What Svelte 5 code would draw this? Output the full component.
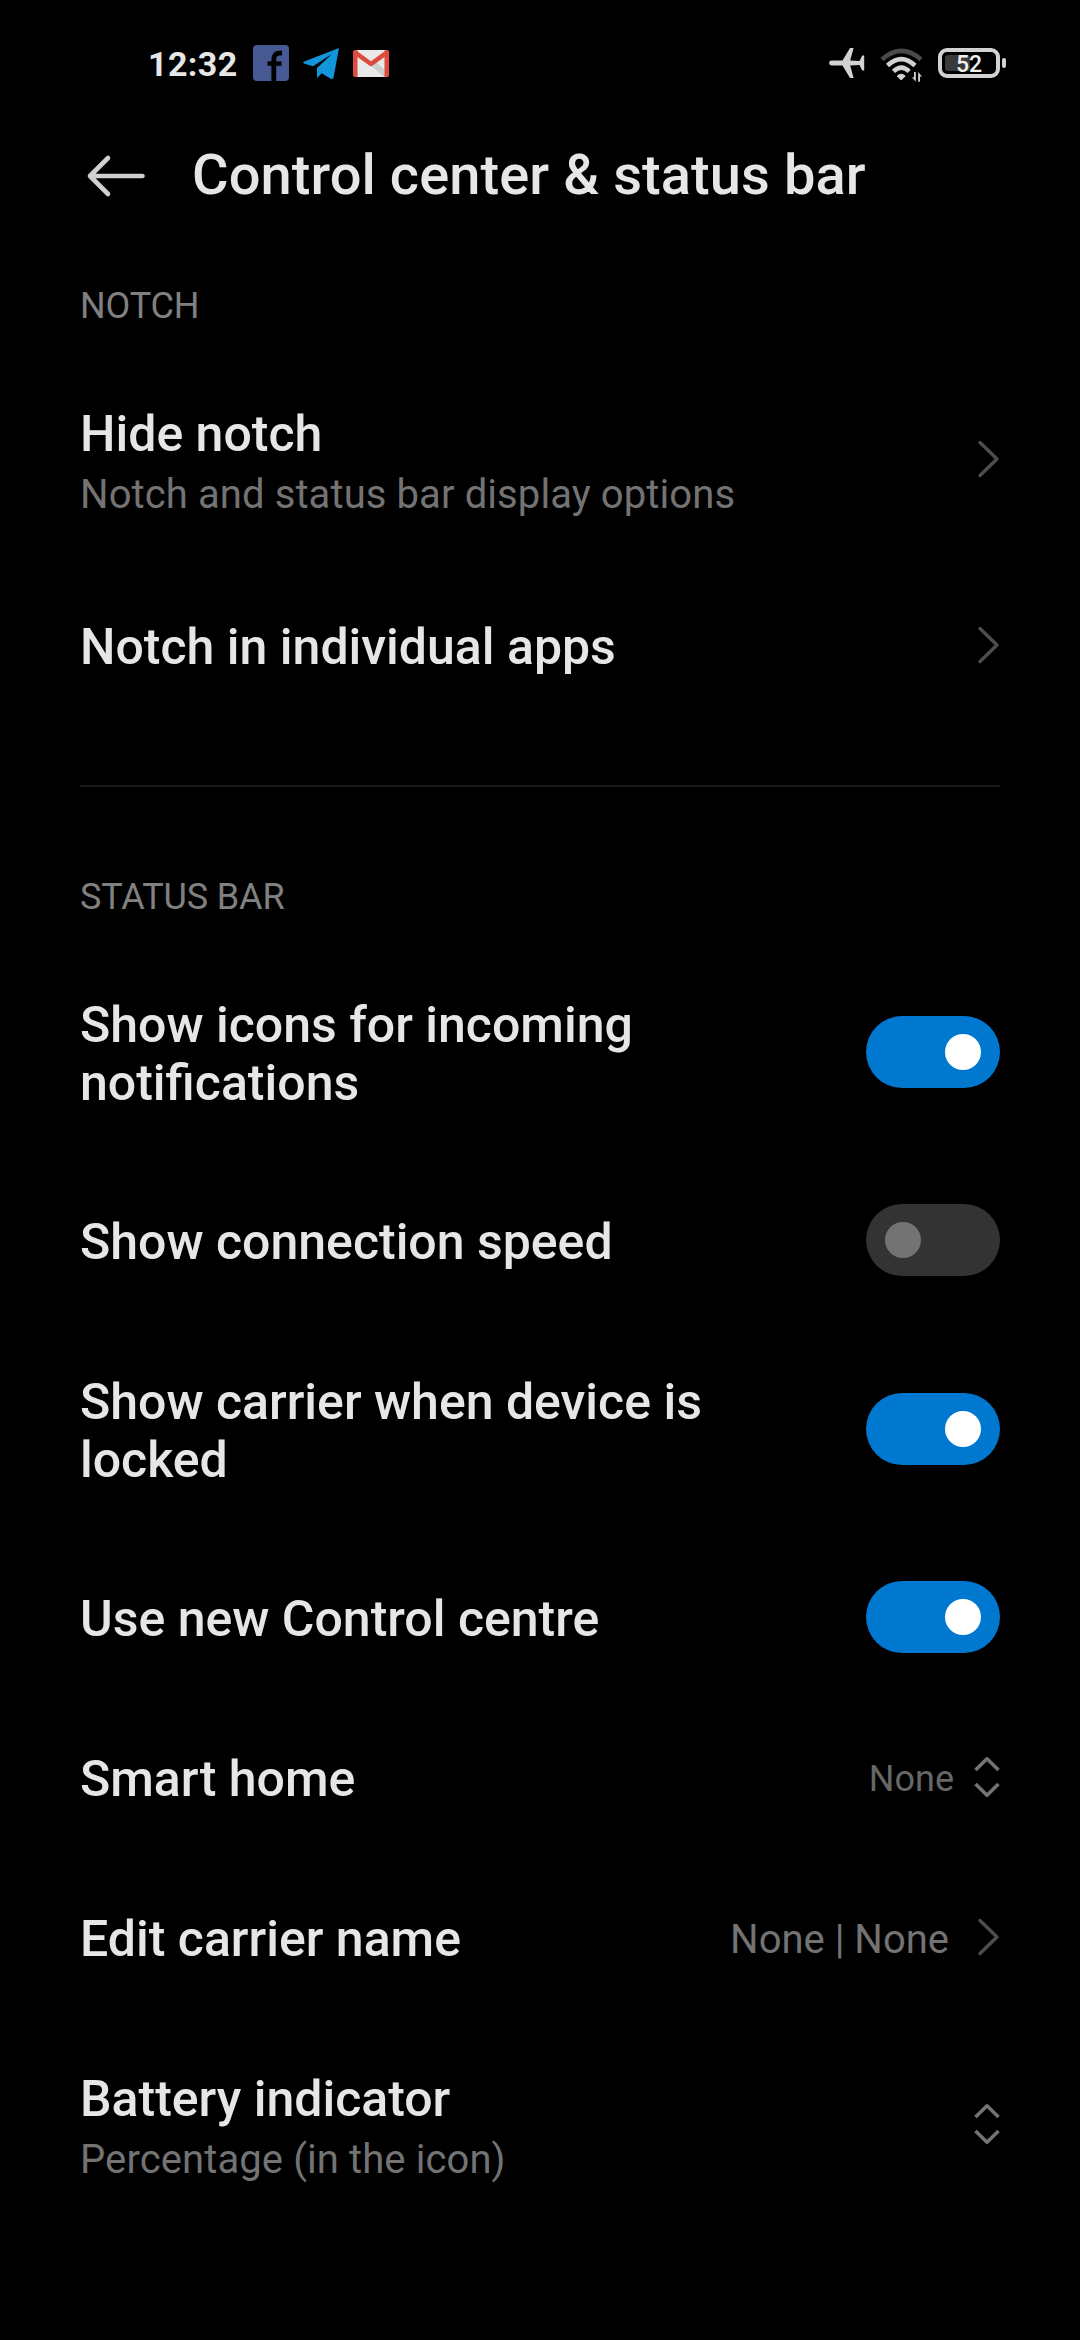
<script lang="ts">
  let battery = 52;

  let notchItems = [
    { title: 'Hide notch', summary: 'Notch and status bar display options' },
    { title: 'Notch in individual apps', summary: '' }
  ];

  let toggles = $state([
    { title: 'Show icons for incoming notifications', on: true, tall: true },
    { title: 'Show connection speed', on: false, tall: false },
    { title: 'Show carrier when device is locked', on: true, tall: true },
    { title: 'Use new Control centre', on: true, tall: false }
  ]);

  let options = [
    { title: 'Smart home', summary: '', value: 'None', type: 'picker' },
    { title: 'Edit carrier name', summary: '', value: 'None | None', type: 'link' },
    { title: 'Battery indicator', summary: 'Percentage (in the icon)', value: '', type: 'picker' }
  ];
</script>

{#snippet chevron()}
  <svg class="chevron" width="24" height="40" viewBox="0 0 24 40">
    <path d="M4 3.5 L21 20 L4 36.5" />
  </svg>
{/snippet}

{#snippet picker()}
  <svg class="picker" width="26" height="42" viewBox="0 0 26 42">
    <path d="M1.5 14 L13 2.8 L24.5 14 M1.5 28 L13 39.2 L24.5 28" />
  </svg>
{/snippet}

<div class="screen">
  <div class="status-bar">
    <div class="status-left">
      <span class="time">12:32</span>
      <svg class="app-icon" width="36" height="36" viewBox="0 0 36 36">
        <rect width="36" height="36" rx="4" fill="#475993" />
        <path d="M20.8 36 V14.5 Q20.8 8.2 26.5 8.2 H29" fill="none" stroke="#000" stroke-width="4.8" />
        <path d="M14.5 18.6 H28.6" stroke="#000" stroke-width="4.4" />
      </svg>
      <svg class="app-icon" width="36" height="36" viewBox="0 0 36 36">
        <path d="M36 3 L0 17 L1 18.6 L10 21.3 L29 9 L14 23 V33 L18.8 28.2 L28.4 34.2 L30.4 33.2 Z" fill="#1296db" />
      </svg>
      <svg class="app-icon" width="36" height="36" viewBox="0 0 36 36">
        <rect y="5" width="36" height="27" rx="3" fill="#e9e9e9" />
        <path d="M18 20.5 L23 17 L34 27 V32 H31 Z" fill="#cbcfcf" />
        <path d="M0 8 Q0 5 3 5 L4.5 5.5 V32 H3 Q0 32 0 29 Z M36 8 Q36 5 33 5 L31.5 5.5 V32 H33 Q36 32 36 29 Z" fill="#dd4b3e" />
        <path d="M2.3 7.7 L18 19 L33.7 7.7" fill="none" stroke="#dd4b3e" stroke-width="4.6" stroke-linejoin="round" stroke-linecap="round" />
      </svg>
    </div>
    <div class="status-right">
      <svg class="plane" width="36" height="32" viewBox="0 0 36 32">
        <path d="M2.5 13.6 H13.5 L21 1 H24.6 L21.2 13.4 L30.5 14 L33.2 8.5 H35.2 V23.5 H33.2 L30.5 18 L21.2 18.6 L24.6 31 H21 L13.5 18.4 H2.5 A2.4 2.4 0 0 1 2.5 13.6 Z" fill="#d2d2d2" />
      </svg>
      <svg class="wifi" width="44" height="34" viewBox="0 0 44 34">
        <g fill="none" stroke-width="4.6">
          <path d="M2 11.5 Q21.3 -5.6 41 11.5" stroke="#4a4a4a" />
          <path d="M7.5 17.5 Q21.3 4.6 35 17.5" stroke="#d2d2d2" />
          <path d="M13.5 23.4 Q21.3 15.8 29.2 23.4" stroke="#d2d2d2" />
        </g>
        <path d="M17.2 28 Q21.2 24.5 25.2 28 L21.2 32 Z" fill="#d2d2d2" stroke="#d2d2d2" stroke-linejoin="round" />
        <path d="M35.8 24 V33.8 L32 29.3 H34 V24 Z M38.2 33.8 V24 L42 28.5 H40 V33.8 Z" fill="#d2d2d2" />
      </svg>
      <div class="battery">
        <div class="battery-level" style="width: {battery}%"></div>
        <span class="battery-text">{battery}</span>
      </div>
      <div class="battery-tip"></div>
    </div>
  </div>

  <header class="header">
    <svg class="back" width="60" height="44" viewBox="0 0 60 44">
      <path d="M56.5 22 H4 M22 4 L4 22 L22 40" />
    </svg>
    <h1>Control center &amp; status bar</h1>
  </header>

  <section>
    <h2>NOTCH</h2>
    {#each notchItems as item}
      <div class="row" class:with-summary={item.summary}>
        <div class="label">
          <div class="title">{item.title}</div>
          {#if item.summary}
            <div class="summary">{item.summary}</div>
          {/if}
        </div>
        {@render chevron()}
      </div>
    {/each}
  </section>

  <div class="divider"></div>

  <section>
    <h2>STATUS BAR</h2>
    {#each toggles as item}
      <div class="row" class:tall={item.tall}>
        <div class="label narrow">
          <div class="title">{item.title}</div>
        </div>
        <button
          class="switch"
          class:on={item.on}
          aria-label={item.title}
          onclick={() => (item.on = !item.on)}
        >
          <span class="knob"></span>
        </button>
      </div>
    {/each}

    {#each options as item}
      <div class="row" class:with-summary={item.summary}>
        <div class="label">
          <div class="title">{item.title}</div>
          {#if item.summary}
            <div class="summary">{item.summary}</div>
          {/if}
        </div>
        {#if item.value}
          <span class="value {item.type}-value">{item.value}</span>
        {/if}
        {#if item.type === 'picker'}
          {@render picker()}
        {:else}
          {@render chevron()}
        {/if}
      </div>
    {/each}
  </section>
</div>

<style>
  :global(body) {
    background: #000;
  }

  .screen {
    box-sizing: border-box;
    width: 1080px;
    height: 2340px;
    overflow: hidden;
    background: #000;
    color: #e6e6e6;
    font-family: Roboto, sans-serif;
  }

  .status-bar {
    display: flex;
    justify-content: space-between;
    align-items: center;
    height: 126px;
    padding: 0 74px 0 148px;
  }

  .status-left,
  .status-right {
    display: flex;
    align-items: center;
  }

  .time {
    width: 91px;
    margin-right: 14px;
    font-size: 34px;
    font-weight: 700;
    letter-spacing: 0.4px;
    line-height: 40px;
    white-space: nowrap;
    padding-top: 2px;
  }

  .app-icon {
    margin-right: 14px;
  }

  .plane {
    margin-right: 15px;
  }

  .wifi {
    margin-right: 14px;
    margin-top: 3px;
  }

  .battery {
    box-sizing: border-box;
    position: relative;
    width: 62px;
    height: 30px;
    padding: 3px;
    border: 4px solid #d2d2d2;
    border-radius: 9px;
  }

  .battery-level {
    height: 100%;
    border-radius: 3px;
    background: #3a3a3a;
  }

  .battery-text {
    position: absolute;
    inset: 0;
    font-size: 23px;
    font-weight: 500;
    line-height: 25px;
    text-align: center;
    color: #f0f0f0;
  }

  .battery-tip {
    width: 4px;
    height: 10px;
    margin-left: 2px;
    border-radius: 2px;
    background: #d2d2d2;
  }

  .header {
    display: flex;
    align-items: center;
    height: 100px;
    padding: 0 80px 0 86px;
  }

  .back {
    margin-right: 46px;
    fill: none;
    stroke: #d0d0d0;
    stroke-width: 4.6;
    stroke-linecap: round;
    stroke-linejoin: round;
  }

  h1 {
    margin: 0;
    padding-bottom: 2px;
    font-size: 56px;
    font-weight: 500;
    letter-spacing: 0.08px;
    line-height: 66px;
    white-space: nowrap;
  }

  section {
    padding: 0 80px;
  }

  h2 {
    box-sizing: border-box;
    height: 126px;
    margin: 0;
    padding-top: 59px;
    font-size: 36px;
    font-weight: 400;
    letter-spacing: -0.15px;
    line-height: 42px;
    color: #808080;
  }

  .divider {
    height: 2px;
    margin: 60px 80px 30px;
    background: #1a1a1a;
  }

  .row {
    display: flex;
    align-items: center;
    height: 160px;
  }

  .row.tall {
    height: 217px;
  }

  .row.with-summary {
    height: 213px;
  }

  .label {
    flex: 1;
    padding-top: 4px;
  }

  .with-summary .label {
    padding-top: 6px;
  }

  .label.narrow {
    padding-right: 130px;
  }

  .title {
    font-size: 50px;
    font-weight: 500;
    line-height: 58px;
  }

  .summary {
    margin-top: 8px;
    font-size: 40px;
    letter-spacing: 0.1px;
    line-height: 47px;
    color: #737373;
  }

  .value {
    color: #737373;
  }

  .picker-value {
    margin-right: 20px;
    padding-top: 3px;
    font-size: 36px;
    color: #666;
  }

  .link-value {
    margin-right: 27px;
    padding-top: 4px;
    font-size: 40px;
  }

  .chevron {
    fill: none;
    stroke: #4d4d4d;
    stroke-width: 3.4;
    stroke-linecap: round;
    stroke-linejoin: round;
  }

  .picker {
    fill: none;
    stroke: #737373;
    stroke-width: 3.6;
    stroke-linejoin: round;
  }

  .switch {
    display: flex;
    flex: none;
    align-items: center;
    width: 134px;
    height: 72px;
    padding: 0 19px;
    border: none;
    border-radius: 36px;
    background: #333;
  }

  .switch.on {
    justify-content: flex-end;
    background: #0078d0;
  }

  .knob {
    width: 36px;
    height: 36px;
    border-radius: 50%;
    background: #737373;
  }

  .switch.on .knob {
    background: #fff;
  }
</style>
